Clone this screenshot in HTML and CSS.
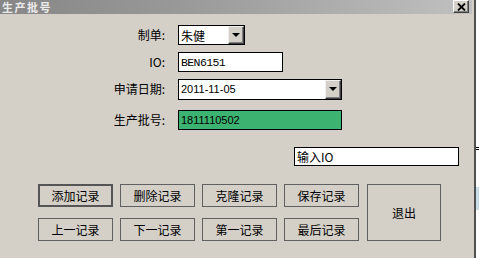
FILE: index.html
```html
<!DOCTYPE html>
<html lang="zh">
<head>
<meta charset="utf-8">
<title>生产批号</title>
<link rel="stylesheet" href="styles.css">
</head>
<body>
<div class="screen">
  <div class="window">
    <div class="titlebar">
      <span class="title">生产批号</span>
      <span class="close">
        <svg width="9" height="8" viewBox="0 0 9 8"><path d="M1 0.5 L8 7.5 M8 0.5 L1 7.5" stroke="#000" stroke-width="1.8" fill="none"/></svg>
      </span>
    </div>
    <div class="content">
      <div class="form">
        <div class="row">
          <label class="lbl">制单:</label>
          <div class="combo combo-short">
            <span class="val cjk">朱健</span>
            <span class="drop"><i class="tri"></i></span>
          </div>
        </div>
        <div class="row">
          <label class="lbl">IO:</label>
          <div class="field field-io"><span class="val mono">BEN6151</span></div>
        </div>
        <div class="row">
          <label class="lbl">申请日期:</label>
          <div class="combo combo-long">
            <span class="val sans">2011-11-05</span>
            <span class="drop"><i class="tri"></i></span>
          </div>
        </div>
        <div class="row row-batch">
          <label class="lbl">生产批号:</label>
          <div class="field field-batch"><span class="val sans">1811110502</span></div>
        </div>
      </div>
      <div class="search-row">
        <div class="field field-search"><span class="val cjk">输入IO</span></div>
      </div>
      <div class="buttons">
        <button class="btn btn-default">添加记录</button>
        <button class="btn">删除记录</button>
        <button class="btn">克隆记录</button>
        <button class="btn">保存记录</button>
        <button class="btn btn-exit">退出</button>
        <button class="btn">上一记录</button>
        <button class="btn">下一记录</button>
        <button class="btn">第一记录</button>
        <button class="btn">最后记录</button>
      </div>
    </div>
  </div>
  <div class="frame-edge"></div>
  <div class="behind">
    <div class="behind-tick"></div>
    <div class="behind-blue"></div>
  </div>
</div>
</body>
</html>
```
FILE: styles.css
```css
* { box-sizing: border-box; }
html, body { margin: 0; padding: 0; }
body {
  width: 479px;
  height: 258px;
  overflow: hidden;
  background: #ffffff;
  font-family: "Noto Sans CJK SC", "Liberation Sans", sans-serif;
  font-size: 12px;
  color: #000;
}
.screen {
  display: flex;
  width: 479px;
  height: 258px;
}
.window {
  width: 474px;
  height: 258px;
  background: #d4d0c8;
  display: flex;
  flex-direction: column;
}
.titlebar {
  height: 14px;
  margin-right: 2px;
  background: linear-gradient(to right, #868686 0%, #9a9a9a 40%, #c0c0c0 100%);
  display: flex;
  align-items: flex-start;
  justify-content: space-between;
  padding-left: 2px;
  padding-right: 3px;
}
.title {
  margin-top: 1px;
  color: #ececec;
  font-weight: 700;
  font-size: 11px;
  line-height: 13px;
  height: 13px;
  letter-spacing: 1.5px;
}
.close {
  width: 16px;
  height: 13px;
  background: #d4d0c8;
  border-top: 1px solid #ffffff;
  border-left: 1px solid #ffffff;
  border-right: 1px solid #404040;
  border-bottom: 1px solid #404040;
  box-shadow: inset -1px -1px 0 #808080;
  display: flex;
  align-items: center;
  justify-content: center;
}
.content {
  flex: 1;
  display: flex;
  flex-direction: column;
}
.form {
  margin-top: 11px;
  display: flex;
  flex-direction: column;
  gap: 7px;
}
.row {
  display: flex;
  align-items: center;
  height: 20px;
}
.row-batch { margin-top: 4px; }
.lbl {
  width: 167px;
  text-align: right;
  padding-right: 2px;
  margin-right: 11px;
  font-size: 12px;
  line-height: 16px;
}
.combo, .field {
  height: 20px;
  background: #ffffff;
  border: 1px solid #000;
  display: flex;
  align-items: center;
  position: relative;
}
.val {
  padding-left: 2px;
  flex: 1;
  white-space: nowrap;
}
.cjk { font-size: 12px; }
.mono {
  font-family: "Liberation Mono", monospace;
  font-size: 11.5px;
  letter-spacing: -0.6px;
}
.sans {
  font-family: "Liberation Sans", sans-serif;
  font-size: 11px;
}
.combo-short { width: 67px; }
.combo-long { width: 164px; height: 21px; }
.drop {
  width: 16px;
  height: 100%;
  background: #d4d0c8;
  border-top: 1px solid #f0f0f0;
  border-left: 1px solid #f0f0f0;
  border-right: 1px solid #404040;
  border-bottom: 1px solid #404040;
  box-shadow: inset -1px -1px 0 #808080;
  display: flex;
  align-items: center;
  justify-content: center;
}
.tri {
  width: 0;
  height: 0;
  border-left: 4px solid transparent;
  border-right: 4px solid transparent;
  border-top: 4px solid #000;
}
.field-io { width: 105px; }
.field-batch {
  width: 164px;
  background: #3cb371;
}
.search-row {
  margin-top: 17px;
  padding-left: 294px;
}
.field-search {
  width: 165px;
  height: 19px;
}
.buttons {
  margin-top: 18px;
  margin-left: 38px;
  display: grid;
  grid-template-columns: repeat(5, 75px);
  grid-template-rows: 23px 23px;
  column-gap: 7px;
  row-gap: 11px;
}
.btn {
  margin: 0;
  padding: 0;
  background: #d4d0c8;
  border: 1px solid #606060;
  font-family: "Noto Sans CJK SC", "Liberation Sans", sans-serif;
  font-size: 12px;
  color: #000;
  line-height: 14px;
}
.btn-default { border: 2px solid #555555; }
.btn-exit {
  grid-column: 5;
  grid-row: 1 / span 2;
  margin-left: 1px;
}
.frame-edge {
  width: 2px;
  height: 258px;
  background: #505050;
}
.behind {
  flex: 1;
  background: #ffffff;
  display: flex;
  flex-direction: column;
}
.behind-tick {
  margin-top: 147px;
  height: 3px;
  border-top: 1px solid #000;
  border-bottom: 1px solid #000;
}
.behind-blue {
  margin-top: 37px;
  height: 23px;
  background: #c8dbe8;
}
```
